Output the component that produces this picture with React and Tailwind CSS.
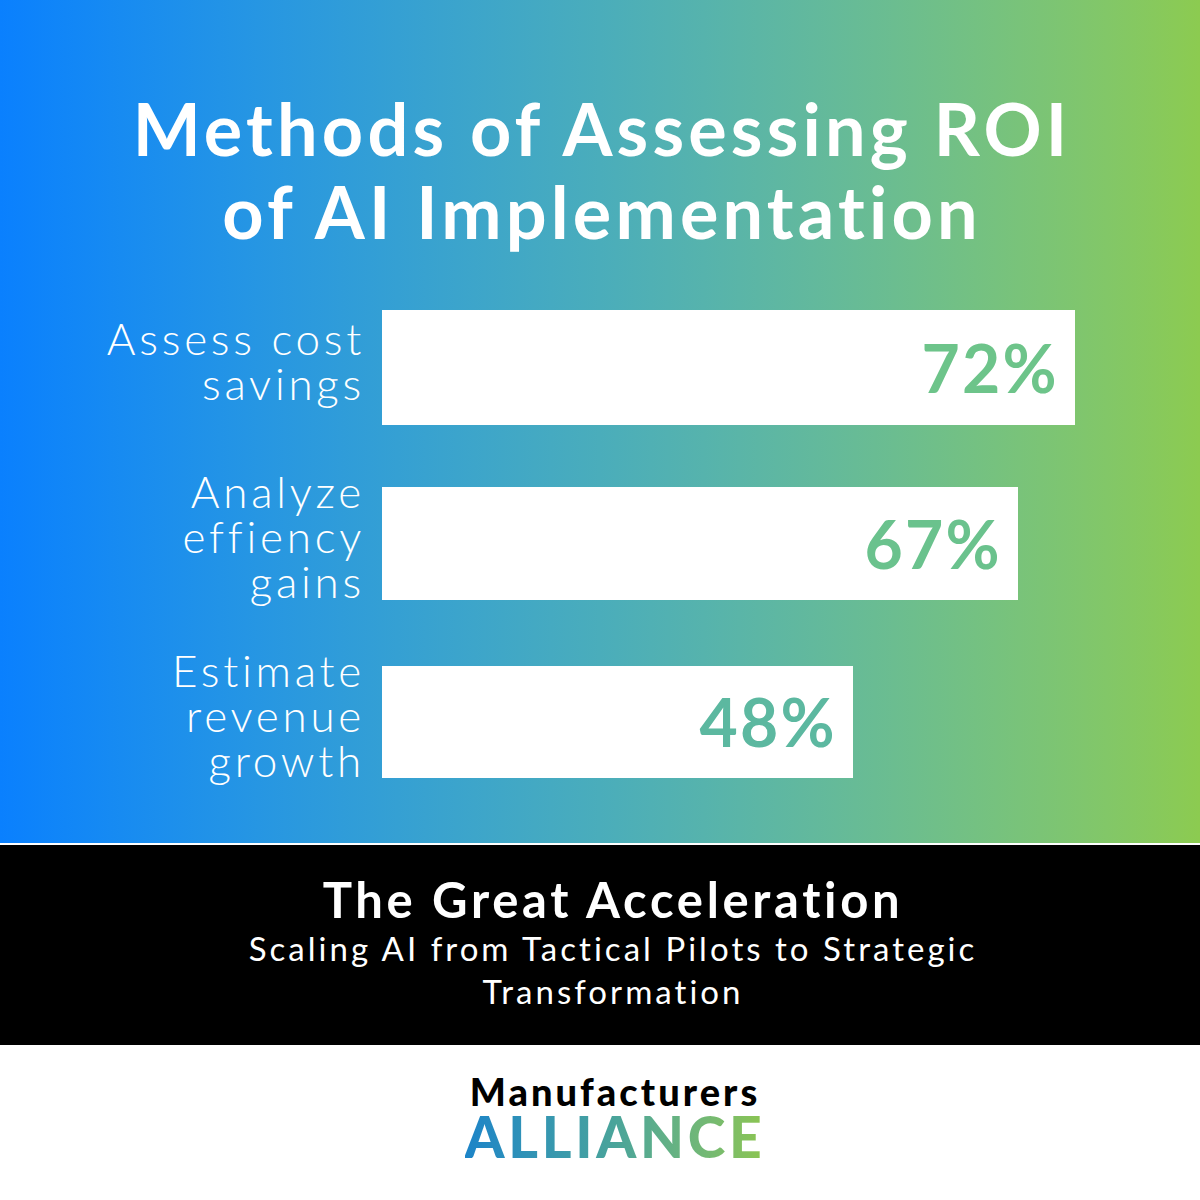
import React from "react";

const rows = [
  { label: ["Assess cost", "savings"], value: "72%", width: "w-[693px]", height: "h-[115px]", color: "text-[#6dc48a]" },
  { label: ["Analyze", "effiency", "gains"], value: "67%", width: "w-[636px]", height: "h-[113px]", color: "text-[#6ac28d]" },
  { label: ["Estimate", "revenue", "growth"], value: "48%", width: "w-[471px]", height: "h-[112px]", color: "text-[#5cb8a0]" },
];

function BarRow({ row }) {
  return (
    <div className={`flex items-center ${row.height}`}>
      <div className="mr-[-3px] w-[365px] shrink-0 pb-[14px] text-right text-[44px] font-light leading-[45px] tracking-[0.085em] text-white">
        {row.label.map((l) => (
          <div key={l}>{l}</div>
        ))}
      </div>
      <div className={`ml-[20px] flex h-full items-center justify-end bg-white pr-[16px] ${row.width}`}>
        <span className={`text-[66px] font-bold leading-none tracking-[0.035em] ${row.color}`}>{row.value}</span>
      </div>
    </div>
  );
}

export default function App() {
  return (
    <div className="flex h-[1200px] w-[1200px] flex-col overflow-hidden bg-white font-['Lato','Liberation_Sans',sans-serif]">
      {/* chart */}
      <section className="flex h-[843px] flex-col bg-gradient-to-r from-[#0a80fe] via-[#4aadbb] to-[#8ccb50]">
        <h1 className="pl-[4px] pt-[87px] text-center text-[72px] font-bold leading-[83px] tracking-[0.058em] text-white">
          Methods of Assessing ROI
          <br />
          of AI Implementation
        </h1>
        <div className="mt-[57px] flex flex-col">
          <BarRow row={rows[0]} />
          <div className="h-[62px]" />
          <BarRow row={rows[1]} />
          <div className="h-[66px]" />
          <BarRow row={rows[2]} />
        </div>
      </section>
      <div className="h-[2px] bg-white" />

      {/* report title */}
      <section className="flex h-[200px] flex-col items-center bg-black pl-[26px] pt-[28px] text-center text-white">
        <h2 className="text-[49px] font-bold leading-[52px] tracking-[0.075em]">The Great Acceleration</h2>
        <p className="mt-[2px] w-[830px] text-[33px] leading-[43px] tracking-[0.092em]">
          Scaling AI from Tactical Pilots to Strategic Transformation
        </p>
      </section>

      {/* logo */}
      <section className="flex flex-1 flex-col items-center pl-[30px] pt-[26px]">
        <div className="flex flex-col items-center leading-none">
          <span className="text-[38px] font-black leading-[40px] tracking-[0.08em] text-black">Manufacturers</span>
          <span className="bg-gradient-to-r from-[#1d84c8] via-[#4aa49a] to-[#8cc54f] bg-clip-text text-[57px] font-black leading-[50px] tracking-[0.065em] text-transparent">
            ALLIANCE
          </span>
        </div>
      </section>
    </div>
  );
}
